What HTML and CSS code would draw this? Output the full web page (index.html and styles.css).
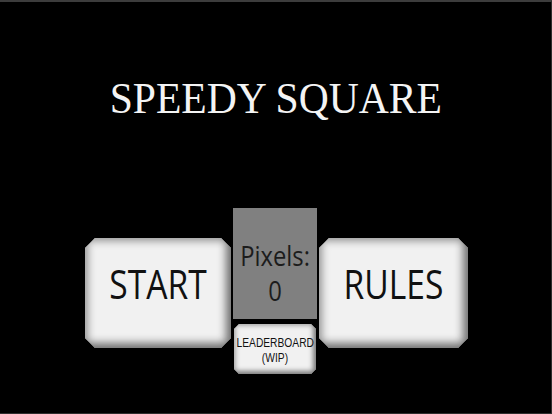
FILE: index.html
```html
<!DOCTYPE html>
<html>
<head>
<meta charset="utf-8">
<link rel="stylesheet" href="styles.css">
</head>
<body>
<div class="frame">
  <h1 class="title">SPEEDY SQUARE</h1>
  <div class="menu">
    <div class="btn btn-big btn-start"><span>START</span></div>
    <div class="middle">
      <div class="score">
        <span class="score-label">Pixels:</span>
        <span class="score-value">0</span>
      </div>
      <div class="btn btn-small"><span class="line">LEADERBOARD</span><span class="line">(WIP)</span></div>
    </div>
    <div class="btn btn-big btn-rules"><span>RULES</span></div>
  </div>
</div>
</body>
</html>
```
FILE: styles.css
```css
html, body {
  margin: 0;
  padding: 0;
  background: #000;
}
.frame {
  box-sizing: border-box;
  width: 552px;
  height: 414px;
  background: #000;
  border-top: 2px solid #3c3c3c;
  border-right: 1px solid #2e2e2e;
  border-bottom: 1px solid #2e2e2e;
  display: flex;
  flex-direction: column;
  align-items: center;
}
.title {
  margin: 71px 0 0 0;
  font-family: "Liberation Serif", serif;
  font-weight: normal;
  font-size: 44px;
  line-height: 52px;
  color: #f4f4f4;
  transform: scaleX(0.945);
}
.menu {
  margin-top: 83px;
  display: flex;
  align-items: flex-start;
  gap: 2px;
  padding-left: 2px;
}
.btn {
  display: flex;
  align-items: center;
  justify-content: center;
  background: #f1f1f1;
  color: #111;
  font-family: "Open Sans", sans-serif;
  box-shadow: inset -5px -5px 8px #6e6e6e, inset 4px 4px 7px #a8a8a8;
}
.btn-big {
  box-sizing: border-box;
  margin-top: 30px;
  height: 110px;
  padding-bottom: 18px;
  font-size: 40px;
  line-height: 48px;
  clip-path: polygon(10px 0, calc(100% - 10px) 0, 100% 10px, 100% calc(100% - 10px), calc(100% - 10px) 100%, 10px 100%, 0 calc(100% - 10px), 0 10px);
}
.btn-big span {
  display: inline-block;
  transform: scaleX(0.84);
}
.btn-start { width: 146px; }
.btn-rules { width: 149px; }
.middle {
  display: flex;
  flex-direction: column;
  align-items: center;
  gap: 5px;
}
.score {
  box-sizing: border-box;
  width: 84px;
  height: 111px;
  padding-top: 30px;
  background: #808080;
  display: flex;
  flex-direction: column;
  align-items: center;
  font-family: "Open Sans", sans-serif;
  color: #1c1c1c;
  font-size: 28px;
  line-height: 35px;
}
.score-label, .score-value {
  display: block;
  transform: scaleX(0.85);
}
.btn-small {
  width: 82px;
  height: 50px;
  padding-top: 3px;
  box-sizing: border-box;
  flex-direction: column;
  font-family: "Liberation Sans", sans-serif;
  font-size: 12.5px;
  line-height: 14.5px;
  text-align: center;
  box-shadow: inset -3px -3px 5px #7a7a7a, inset 2px 2px 4px #b0b0b0;
  clip-path: polygon(5px 0, calc(100% - 5px) 0, 100% 5px, 100% calc(100% - 5px), calc(100% - 5px) 100%, 5px 100%, 0 calc(100% - 5px), 0 5px);
}
.btn-small .line {
  display: block;
  transform: scaleX(0.82);
  white-space: nowrap;
}
```
